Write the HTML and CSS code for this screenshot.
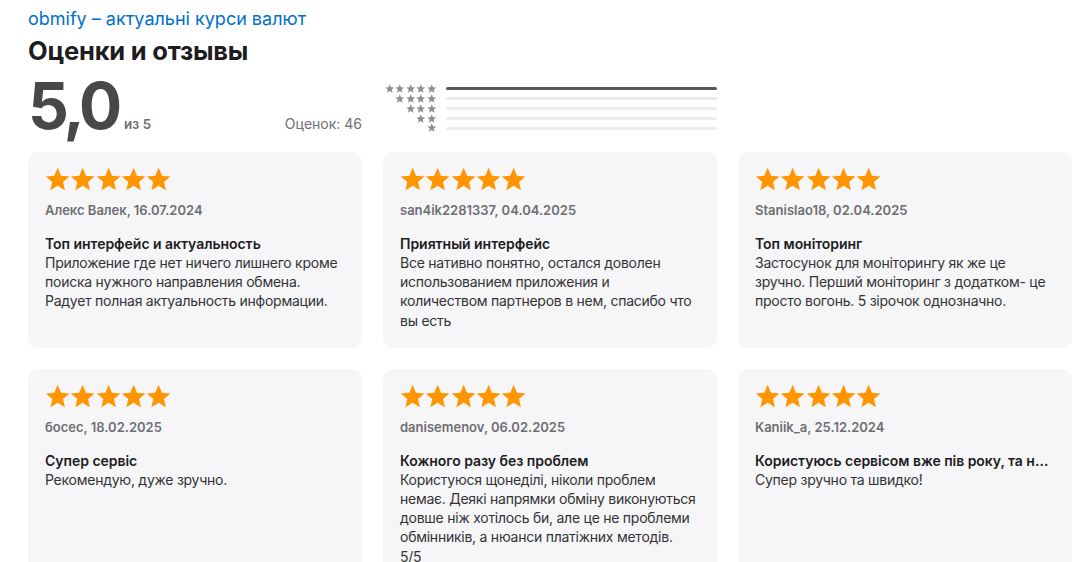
FILE: index.html
```html
<!DOCTYPE html>
<html lang="ru">

<head>
    <meta charset="UTF-8">
    <title>obmify – Оценки и отзывы</title>
    <link rel="stylesheet" href="styles.css">
</head>

<body>
    <svg width="0" height="0" class="defs">
        <symbol id="star" viewBox="0 0 24 24">
            <polygon points="12,0.8 15.2,8.2 23.2,8.9 17.1,14.2 18.9,22.1 12,17.9 5.1,22.1 6.9,14.2 0.8,8.9 8.8,8.2" />
        </symbol>
    </svg>

    <div class="page">
        <a class="app-link" href="#">obmify – актуальні курси валют</a>
        <h1>Оценки и отзывы</h1>

        <div class="summary">
            <div class="score">
                <div class="score-main">
                    <span class="score-big">5,0</span>
                    <span class="score-of">из 5</span>
                </div>
                <span class="score-count">Оценок: 46</span>
            </div>

            <div class="hist">
                <div class="hist-row">
                    <span class="hist-stars"><svg><use href="#star"/></svg><svg><use href="#star"/></svg><svg><use href="#star"/></svg><svg><use href="#star"/></svg><svg><use href="#star"/></svg></span>
                    <span class="hist-bar"><span class="hist-fill" style="width: 100%"></span></span>
                </div>
                <div class="hist-row">
                    <span class="hist-stars"><svg><use href="#star"/></svg><svg><use href="#star"/></svg><svg><use href="#star"/></svg><svg><use href="#star"/></svg></span>
                    <span class="hist-bar"><span class="hist-fill" style="width: 0%"></span></span>
                </div>
                <div class="hist-row">
                    <span class="hist-stars"><svg><use href="#star"/></svg><svg><use href="#star"/></svg><svg><use href="#star"/></svg></span>
                    <span class="hist-bar"><span class="hist-fill" style="width: 0%"></span></span>
                </div>
                <div class="hist-row">
                    <span class="hist-stars"><svg><use href="#star"/></svg><svg><use href="#star"/></svg></span>
                    <span class="hist-bar"><span class="hist-fill" style="width: 0%"></span></span>
                </div>
                <div class="hist-row">
                    <span class="hist-stars"><svg><use href="#star"/></svg></span>
                    <span class="hist-bar"><span class="hist-fill" style="width: 0%"></span></span>
                </div>
            </div>
        </div>

        <div class="reviews">
            <div class="review">
                <div class="stars"><svg><use href="#star"/></svg><svg><use href="#star"/></svg><svg><use href="#star"/></svg><svg><use href="#star"/></svg><svg><use href="#star"/></svg></div>
                <div class="author">Алекс Валек, 16.07.2024</div>
                <h3>Топ интерфейс и актуальность</h3>
                <p>Приложение где нет ничего лишнего кроме поиска нужного направления обмена. Радует полная актуальность информации.</p>
            </div>

            <div class="review">
                <div class="stars"><svg><use href="#star"/></svg><svg><use href="#star"/></svg><svg><use href="#star"/></svg><svg><use href="#star"/></svg><svg><use href="#star"/></svg></div>
                <div class="author">san4ik2281337, 04.04.2025</div>
                <h3>Приятный интерфейс</h3>
                <p>Все нативно понятно, остался доволен использованием приложения и количеством партнеров в нем, спасибо что вы есть</p>
            </div>

            <div class="review">
                <div class="stars"><svg><use href="#star"/></svg><svg><use href="#star"/></svg><svg><use href="#star"/></svg><svg><use href="#star"/></svg><svg><use href="#star"/></svg></div>
                <div class="author">Stanislao18, 02.04.2025</div>
                <h3>Топ моніторинг</h3>
                <p>Застосунок для моніторингу як же це зручно. Перший моніторинг з додатком- це просто вогонь. 5 зірочок однозначно.</p>
            </div>

            <div class="review">
                <div class="stars"><svg><use href="#star"/></svg><svg><use href="#star"/></svg><svg><use href="#star"/></svg><svg><use href="#star"/></svg><svg><use href="#star"/></svg></div>
                <div class="author">босес, 18.02.2025</div>
                <h3>Супер сервіс</h3>
                <p>Рекомендую, дуже зручно.</p>
            </div>

            <div class="review">
                <div class="stars"><svg><use href="#star"/></svg><svg><use href="#star"/></svg><svg><use href="#star"/></svg><svg><use href="#star"/></svg><svg><use href="#star"/></svg></div>
                <div class="author">danisemenov, 06.02.2025</div>
                <h3>Кожного разу без проблем</h3>
                <p>Користуюся щонеділі, ніколи проблем немає. Деякі напрямки обміну виконуються довше ніж хотілось би, але це не проблеми обмінників, а нюанси платіжних методів.<br>5/5</p>
            </div>

            <div class="review">
                <div class="stars"><svg><use href="#star"/></svg><svg><use href="#star"/></svg><svg><use href="#star"/></svg><svg><use href="#star"/></svg><svg><use href="#star"/></svg></div>
                <div class="author">Kaniik_a, 25.12.2024</div>
                <h3>Користуюсь сервісом вже пів року, та не шкодую</h3>
                <p>Супер зручно та швидко!</p>
            </div>
        </div>
    </div>
</body>

</html>
```

FILE: styles.css
```css
body {
    margin: 0;
    font-family: Inter, "Noto Sans", Arial, sans-serif;
    color: #1d1d1f;
    background: #fff;
}

.defs {
    position: absolute;
}

.page {
    padding: 8px 0 0 28px;
}

.app-link {
    display: block;
    font-size: 18px;
    line-height: 22px;
    color: #0070c9;
    text-decoration: none;
}

h1 {
    margin: 6px 0 0;
    font-size: 25.5px;
    line-height: 30px;
    font-weight: 700;
    letter-spacing: -0.2px;
}

.summary {
    display: grid;
    grid-template-columns: 334px 334px;
    column-gap: 21px;
    margin-top: 8px;
}

.score {
    display: flex;
    justify-content: space-between;
    align-items: baseline;
}

.score-main {
    display: flex;
    align-items: baseline;
    gap: 6px;
}

.score-big {
    font-size: 64px;
    line-height: 64px;
    font-weight: 700;
    color: #48484a;
    letter-spacing: -4px;
}

.score-of {
    font-size: 13.5px;
    font-weight: 600;
    color: #6e6e73;
}

.score-count {
    font-size: 14px;
    color: #6e6e73;
}

.hist {
    display: flex;
    flex-direction: column;
    padding-top: 10px;
}

.hist-row {
    display: flex;
    align-items: center;
    height: 9.8px;
}

.hist-stars {
    width: 53px;
    display: flex;
    justify-content: flex-end;
    gap: 1px;
}

.hist-stars svg {
    width: 9.5px;
    height: 9.5px;
    fill: #8e8e93;
}

.hist-bar {
    flex: 1;
    height: 3px;
    margin-left: 10px;
    background: #ececf0;
    border-radius: 2px;
    overflow: hidden;
}

.hist-fill {
    display: block;
    height: 100%;
    background: #58585c;
}

.reviews {
    display: grid;
    grid-template-columns: repeat(3, 334px);
    gap: 21px;
    margin-top: 14px;
}

.review {
    background: #f6f6f8;
    border-radius: 10px;
    padding: 14px 17px 18px 17px;
    min-width: 0;
}

.stars {
    display: flex;
    height: 27px;
    align-items: center;
}

.stars svg {
    width: 25.3px;
    height: 25.3px;
    fill: #ff9500;
}

.author {
    margin-top: 8px;
    font-size: 13px;
    line-height: 18px;
    font-weight: 600;
    color: #6e6e73;
}

.review h3 {
    margin: 15px 0 0;
    font-size: 14px;
    line-height: 19px;
    font-weight: 600;
    letter-spacing: -0.04px;
    white-space: nowrap;
    overflow: hidden;
    text-overflow: ellipsis;
}

.review p {
    margin: 0;
    font-size: 14px;
    line-height: 19.2px;
    letter-spacing: -0.25px;
    color: #333336;
}
```
